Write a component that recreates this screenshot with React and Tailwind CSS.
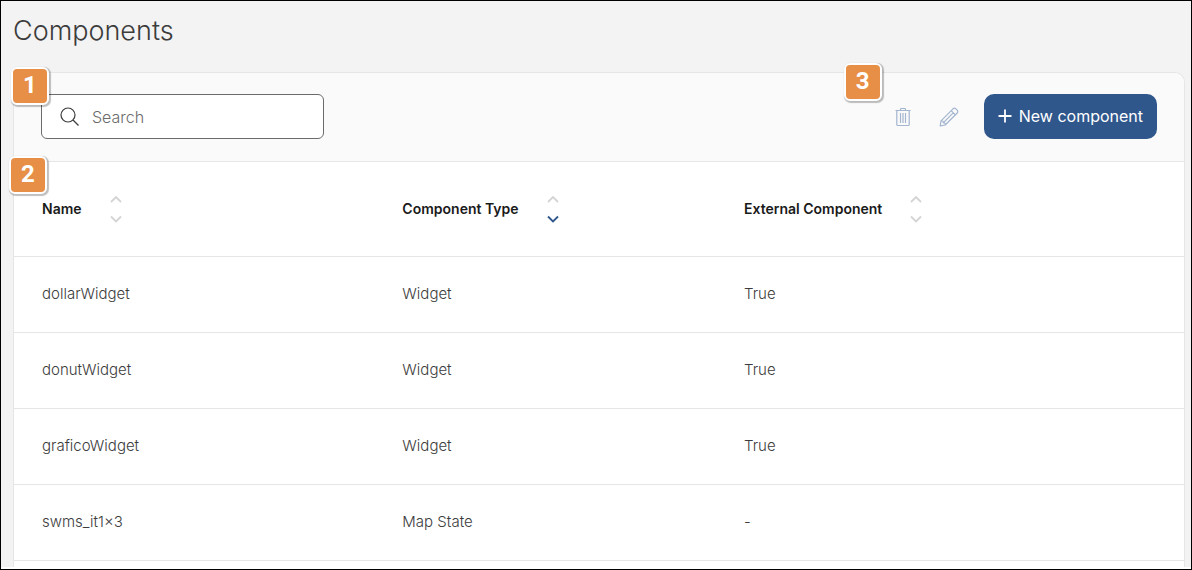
import { useState } from "react";

const columns = [
  { key: "name", label: "Name", width: "w-[30.8%]" },
  { key: "type", label: "Component Type", width: "w-[29.2%]" },
  { key: "external", label: "External Component", width: "w-[40%]" },
];

const components = [
  { name: "dollarWidget", type: "Widget", external: "True" },
  { name: "donutWidget", type: "Widget", external: "True" },
  { name: "graficoWidget", type: "Widget", external: "True" },
  { name: "swms_it1x3", type: "Map State", external: "-" },
];

function Callout({ number, className }) {
  return (
    <span
      className={`absolute z-10 flex h-[38px] w-[38px] items-center justify-center rounded-md border-2 border-white bg-[#e78f47] pb-0.5 font-['Roboto',sans-serif] text-2xl leading-none font-bold text-white shadow-[1px_1px_1px_1px_rgba(0,0,0,0.25)] ${className}`}
    >
      {number}
    </span>
  );
}

function SearchIcon() {
  return (
    <svg className="h-5 w-5 shrink-0" viewBox="0 0 20 20" fill="none" stroke="#3c3c3c" strokeWidth="1.2">
      <circle cx="8" cy="8" r="7" />
      <path d="M13 13 18.5 18.5" />
    </svg>
  );
}

function TrashIcon() {
  return (
    <svg className="h-5 w-4" viewBox="0 0 16 20" fill="none" stroke="currentColor" strokeWidth="1.2">
      <path d="M0.5 3.5h15M5.5 3.5V2.3q0-.8.8-.8h3.4q.8 0 .8.8v1.2M1.8 3.5v14q0 1 1 1h10.4q1 0 1-1v-14" />
      <path d="M5.5 6v10M8 6v10M10.5 6v10" />
    </svg>
  );
}

function PencilIcon() {
  return (
    <svg className="h-5 w-5" viewBox="0 0 20 20" fill="none" stroke="currentColor" strokeWidth="1.2" strokeLinejoin="round">
      <path d="M1.2 18.8l.8-5L14 1.8q1.4-1.2 2.8 0l1.4 1.4q1.2 1.4 0 2.8L6.2 18z" />
      <path d="M2 13.8q2.6-.4 2.2 2q2.4-.4 2 2.2M12.2 3.6l4.2 4.2M4.2 15.8 14.2 5.8" />
    </svg>
  );
}

function SortArrows({ direction }) {
  return (
    <svg className="h-7 w-3" viewBox="0 0 12 28" fill="none" strokeWidth="1.8">
      <path d="M1 7 6 2l5 5" stroke={direction === "asc" ? "#2f578b" : "#d4d4d4"} />
      <path d="M1 21.5l5 5 5-5" stroke={direction === "desc" ? "#2f578b" : "#d4d4d4"} />
    </svg>
  );
}

export default function App() {
  const [search, setSearch] = useState("");
  const [sort, setSort] = useState({ key: "type", direction: "desc" });

  const toggleSort = (key) => {
    setSort((s) => ({ key, direction: s.key === key && s.direction === "desc" ? "asc" : "desc" }));
  };

  const rows = components.filter((c) => c.name.toLowerCase().includes(search.toLowerCase()));

  return (
    <div className="flex min-h-screen flex-col border border-black bg-white pb-0.5 font-['Inter',sans-serif] text-[#3c3c3c]">
      <main className="flex flex-1 flex-col bg-[#f3f3f3] pr-1.5 pl-3">
        <h1 className="pt-3 pb-6 text-[27px] leading-[35px] font-light">Components</h1>

        <section className="relative flex-1 rounded-t-[10px] border border-b-0 border-[#e6e6e6] bg-white">
          <Callout number={1} className="-top-1.5 -left-[3px]" />

          {/* Toolbar */}
          <div className="flex items-center justify-between rounded-t-[10px] border-b border-[#e6e6e6] bg-[#fafafa] px-[27px] pt-[21px] pb-[22px]">
            <label className="flex h-[45px] w-[283px] items-center gap-3 rounded-md border border-[#6b6b6b] bg-white px-[18px]">
              <SearchIcon />
              <input
                type="text"
                aria-label="Search"
                placeholder="Search"
                value={search}
                onChange={(e) => setSearch(e.target.value)}
                className="w-full min-w-0 text-base font-light outline-none placeholder:text-[#6b6b6b]"
              />
            </label>

            <div className="relative flex items-center text-[#a3b5cf]">
              <Callout number={3} className="-top-[31px] -left-[51px]" />
              <button type="button" aria-label="Delete" className="mr-7">
                <TrashIcon />
              </button>
              <button type="button" aria-label="Edit" className="mr-[25px]">
                <PencilIcon />
              </button>
              <button
                type="button"
                className="flex h-[45px] items-center gap-[7px] rounded-[10px] bg-[#2f578b] px-[14px] pb-px text-base font-normal text-white"
              >
                <svg className="h-[14px] w-[14px]" viewBox="0 0 14 14" stroke="currentColor" strokeWidth="1.8">
                  <path d="M7 0.5v13M0.5 7h13" />
                </svg>
                New component
              </button>
            </div>
          </div>

          {/* Table */}
          <div className="relative">
            <Callout number={2} className="-top-1.5 -left-[5px]" />
            <table className="w-full table-fixed border-collapse text-left text-[15px]">
              <thead>
                <tr className="h-[94px] border-b border-[#e6e6e6]">
                  {columns.map((col) => (
                    <th key={col.key} className={`px-7 text-sm font-semibold text-[#1a1a1a] ${col.width}`}>
                      <button type="button" onClick={() => toggleSort(col.key)} className="flex items-center gap-7">
                        {col.label}
                        <SortArrows direction={sort.key === col.key ? sort.direction : null} />
                      </button>
                    </th>
                  ))}
                </tr>
              </thead>
              <tbody className="font-light">
                {rows.map((row) => (
                  <tr key={row.name} className="h-[76px] border-b border-[#e6e6e6]">
                    <td className="px-7">{row.name}</td>
                    <td className="px-7">{row.type}</td>
                    <td className="px-7">{row.external}</td>
                  </tr>
                ))}
              </tbody>
            </table>
          </div>
        </section>
      </main>
    </div>
  );
}
